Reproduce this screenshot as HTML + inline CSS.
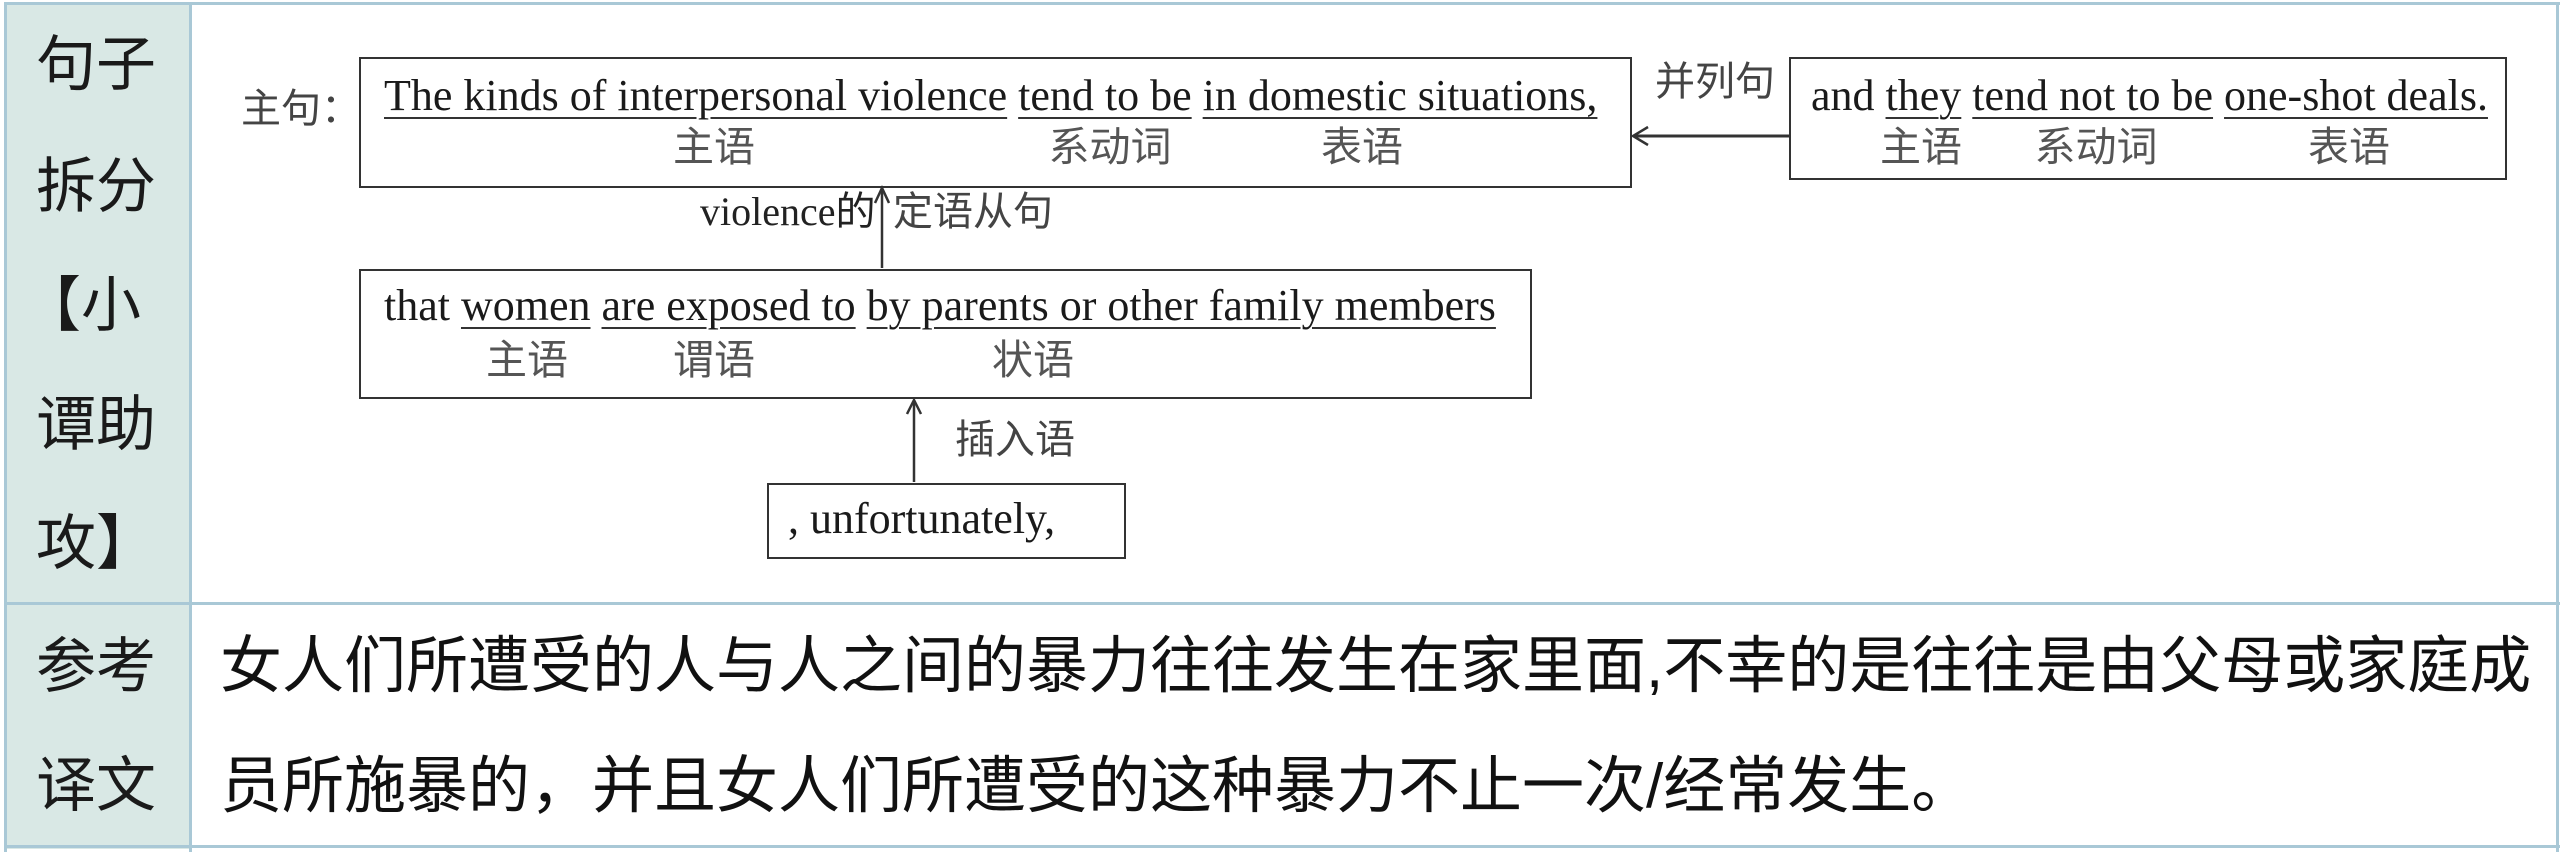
<!DOCTYPE html>
<html><head><meta charset="utf-8"><style>
html,body{margin:0;padding:0;background:#fff;}
body{width:2560px;height:852px;position:relative;overflow:hidden;font-family:"Liberation Serif","Noto Serif CJK SC",serif;}
.a{position:absolute;white-space:nowrap;}
.col{position:absolute;left:4px;top:3px;width:186px;height:846px;background:#d9e8e5;}
.hl{position:absolute;height:3px;background:#a9c8d6;}
.vl{position:absolute;width:3px;background:#a9c8d6;}
.side{font-family:"Liberation Sans","Noto Sans CJK SC",sans-serif;font-size:60px;color:#1a1a1a;line-height:60px;left:36px;}
.box{position:absolute;border:2px solid #333;box-sizing:border-box;}
.en{font-size:44px;line-height:44px;color:#1a1a1a;}
.u{text-decoration:underline;text-decoration-thickness:2px;text-underline-offset:7px;text-decoration-color:#333;}
.lab{font-family:"Liberation Sans","Noto Sans CJK SC",sans-serif;font-size:41px;line-height:40px;color:#555;transform:translateX(-50%);}
.g{font-family:"Liberation Serif","Noto Sans CJK SC",serif;font-size:40px;line-height:40px;color:#444;}
.cn{font-family:"Liberation Sans","Noto Sans CJK SC",sans-serif;font-size:62px;line-height:62px;color:#111;left:220px;}
</style></head><body>
<div class="col"></div>
<div class="hl" style="left:4px;top:2px;width:2556px;"></div>
<div class="hl" style="left:4px;top:602px;width:2556px;"></div>
<div class="hl" style="left:4px;top:845px;width:2556px;"></div>
<div class="vl" style="left:4px;top:2px;height:850px;"></div>
<div class="vl" style="left:189px;top:2px;height:850px;"></div>
<div class="vl" style="left:2556px;top:2px;height:850px;"></div>

<div class="a side" style="top:35px;">句子</div>
<div class="a side" style="top:157px;">拆分</div>
<div class="a side" style="top:276px;left:21px;">【小</div>
<div class="a side" style="top:395px;">谭助</div>
<div class="a side" style="top:514px;">攻】</div>
<div class="a side" style="top:637px;">参考</div>
<div class="a side" style="top:756px;">译文</div>

<div class="a cn" style="top:636px;">女人们所遭受的人与人之间的暴力往往发生在家里面,不幸的是往往是由父母或家庭成</div>
<div class="a cn" style="top:756px;">员所施暴的，并且女人们所遭受的这种暴力不止一次/经常发生。</div>

<!-- main box -->
<div class="box" style="left:359px;top:57px;width:1273px;height:131px;"></div>
<div class="a g" style="left:241px;top:89px;">主句：</div>
<div class="a en" style="left:384px;top:74px;"><span class="u">The kinds of interpersonal violence</span> <span class="u">tend to be</span> <span class="u">in domestic situations,</span></div>
<div class="a lab" style="left:714px;top:127px;">主语</div>
<div class="a lab" style="left:1110px;top:127px;">系动词</div>
<div class="a lab" style="left:1362px;top:127px;">表语</div>

<!-- right box -->
<div class="box" style="left:1789px;top:57px;width:718px;height:123px;"></div>
<div class="a en" style="left:1811px;top:74px;">and <span class="u">they</span> <span class="u">tend not to be</span> <span class="u">one-shot deals.</span></div>
<div class="a lab" style="left:1921px;top:127px;">主语</div>
<div class="a lab" style="left:2096px;top:127px;">系动词</div>
<div class="a lab" style="left:2349px;top:127px;">表语</div>
<div class="a g" style="left:1655px;top:62px;">并列句</div>

<!-- box 2 -->
<div class="box" style="left:359px;top:269px;width:1173px;height:130px;"></div>
<div class="a en" style="left:384px;top:284px;">that <span class="u">women</span> <span class="u">are exposed to</span> <span class="u">by parents or other family members</span></div>
<div class="a lab" style="left:527px;top:340px;">主语</div>
<div class="a lab" style="left:714px;top:340px;">谓语</div>
<div class="a lab" style="left:1033px;top:340px;">状语</div>
<div class="a g" style="left:700px;top:192px;color:#222;">violence的</div>
<div class="a g" style="left:893px;top:192px;">定语从句</div>
<div class="a g" style="left:955px;top:420px;">插入语</div>

<!-- box 3 -->
<div class="box" style="left:767px;top:483px;width:359px;height:76px;"></div>
<div class="a en" style="left:788px;top:497px;">, unfortunately,</div>

<svg class="a" style="left:0;top:0;" width="2560" height="852">
<g stroke="#333" stroke-width="2.5" fill="none">
<line x1="882" y1="268" x2="882" y2="189"/>
<polyline points="875,203 882,188 889,203"/>
<line x1="914" y1="482" x2="914" y2="400"/>
<polyline points="907,414 914,400 921,414"/>
<line x1="1789" y1="136" x2="1633" y2="136" stroke-width="3"/>
<polyline points="1648,127 1633,136 1648,145"/>
</g>
</svg>
</body></html>
